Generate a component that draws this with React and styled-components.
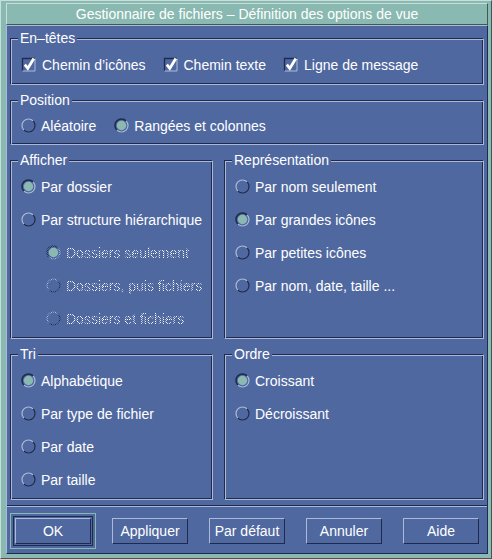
import React, { useId } from "react";
import styled, { createGlobalStyle, css } from "styled-components";

const C = {
  blue: "#5068a0",
  dark: "#1f2a4c",
  light: "#adb9d8",
  teal: "#8ab9b1",
  tealLight: "#c6dfda",
  tealDark: "#3c5b56",
  text: "#ffffff",
};

const GlobalStyle = createGlobalStyle`
  html, body {
    margin: 0;
    padding: 0;
    background: ${C.teal};
  }
  body {
    font-family: "Liberation Sans", Arial, sans-serif;
    font-size: 14px;
  }
`;

const Window = styled.div`
  box-sizing: border-box;
  width: 492px;
  height: 559px;
  background: ${C.teal};
  border: 1px solid;
  border-color: ${C.tealLight} ${C.tealDark} ${C.tealDark} ${C.tealLight};
  padding: 2px 3px 4px 5px;
  display: flex;
  flex-direction: column;
`;

const TitleBar = styled.div`
  box-sizing: border-box;
  height: 22px;
  flex: none;
  border: 1px solid;
  border-color: ${C.tealLight} ${C.tealDark} ${C.tealDark} ${C.tealLight};
  background: ${C.teal};
  color: ${C.text};
  display: flex;
  align-items: center;
  justify-content: center;
  font-size: 14px;
  white-space: nowrap;
`;

const Body = styled.div`
  box-sizing: border-box;
  flex: 1;
  background: ${C.blue};
  border: 1px solid;
  border-color: ${C.light} ${C.dark} ${C.dark} ${C.light};
  display: flex;
  flex-direction: column;
  color: ${C.text};
`;

const Main = styled.div`
  flex: 1;
  display: flex;
  flex-direction: column;
  gap: 15px;
  padding: 12px 3px 0;
`;

const Columns = styled.div`
  display: grid;
  grid-template-columns: 203px 1fr;
  gap: 11px;
`;

const Frame = styled.section`
  position: relative;
  box-sizing: border-box;
  padding: 9px 10px 3px;
  border: 1px solid;
  border-color: ${C.dark} ${C.light} ${C.light} ${C.dark};
  box-shadow: inset 1px 1px 0 ${C.light}, inset -1px -1px 0 ${C.dark};
`;

const Legend = styled.span`
  position: absolute;
  top: -9px;
  left: 7px;
  padding: 0 2px;
  line-height: 16px;
  font-size: 14px;
  color: ${C.text};
  background: ${C.blue};
  white-space: nowrap;
`;

const Inline = styled.div`
  display: flex;
  align-items: center;
  gap: ${(p) => p.$gap}px;
`;

const Row = styled.div`
  height: ${(p) => p.$h ?? 33}px;
  display: flex;
  align-items: center;
  gap: ${(p) => p.$gap ?? 5}px;
  padding-left: ${(p) => p.$indent ?? 0}px;
  white-space: nowrap;
`;

const Text = styled.span`
  color: ${C.text};
  ${(p) =>
    p.$disabled &&
    css`
      color: transparent;
      background-image: conic-gradient(
        #ffffff 0 25%,
        transparent 0 50%,
        #ffffff 0 75%,
        transparent 0
      );
      background-size: 2px 2px;
      -webkit-background-clip: text;
      background-clip: text;
    `}
`;

const Icon = styled.svg`
  flex: none;
  display: block;
`;

const Separator = styled.div`
  height: 0;
  border-top: 1px solid ${C.dark};
  border-bottom: 1px solid ${C.light};
`;

const ButtonRow = styled.div`
  display: flex;
  gap: 21px;
  padding: 11px 8px 9px;
`;

const Button = styled.div`
  box-sizing: border-box;
  width: 76px;
  height: 26px;
  border: 1px solid;
  border-color: ${C.light} ${C.dark} ${C.dark} ${C.light};
  display: flex;
  align-items: center;
  justify-content: center;
  color: ${C.text};
  ${(p) =>
    p.$default &&
    css`
      box-shadow: 0 0 0 1px ${C.blue}, 0 0 0 2px ${C.dark};
      outline: 1px solid ${C.teal};
      outline-offset: 4px;
    `}
`;

function Radio({ checked, disabled }) {
  const raw = useId();
  const id = "m" + raw.replace(/[^a-zA-Z0-9]/g, "");
  const tl = checked ? C.dark : C.light;
  const br = checked ? C.light : C.dark;
  return (
    <Icon width="15" height="15" viewBox="0 0 15 15">
      {disabled && (
        <defs>
          <pattern id={id + "p"} width="2" height="2" patternUnits="userSpaceOnUse">
            <rect width="1" height="1" fill="#fff" />
            <rect x="1" y="1" width="1" height="1" fill="#fff" />
          </pattern>
          <mask id={id}>
            <rect width="15" height="15" fill={`url(#${id}p)`} />
          </mask>
        </defs>
      )}
      {checked && <circle cx="7.5" cy="7.5" r="4.7" fill={C.teal} />}
      <g mask={disabled ? `url(#${id})` : undefined} fill="none">
        <path d="M2.9 12.1 A6.5 6.5 0 0 1 12.1 2.9" stroke={tl} strokeWidth={checked ? 1.5 : 1.2} />
        <path d="M12.1 2.9 A6.5 6.5 0 0 1 2.9 12.1" stroke={br} strokeWidth={1.2} />
      </g>
    </Icon>
  );
}

function Check() {
  return (
    <Icon width="14" height="14" viewBox="0 0 14 14" style={{ overflow: "visible" }}>
      <path d="M0.5 13 V0.5 H13" stroke={C.dark} strokeWidth="1.3" fill="none" />
      <path d="M13 0.5 V13 H0.5" stroke={C.light} strokeWidth="1" fill="none" />
      <path d="M2.8 6.6 L5.8 10.4 L11.8 0.6" stroke="#ffffff" strokeWidth="2.8" fill="none" />
    </Icon>
  );
}

function RadioRow({ label, checked, disabled, indent }) {
  return (
    <Row $indent={indent}>
      <Radio checked={checked} disabled={disabled} />
      <Text $disabled={disabled}>{label}</Text>
    </Row>
  );
}

export default function App() {
  return (
    <>
      <GlobalStyle />
      <Window>
        <TitleBar>Gestionnaire de fichiers – Définition des options de vue</TitleBar>
        <Body>
          <Main>
            <Frame>
              <Legend>En–têtes</Legend>
              <Row $gap={18} $indent={1}>
                <Inline $gap={6}>
                  <Check />
                  <Text>Chemin d’icônes</Text>
                </Inline>
                <Inline $gap={6}>
                  <Check />
                  <Text>Chemin texte</Text>
                </Inline>
                <Inline $gap={6}>
                  <Check />
                  <Text>Ligne de message</Text>
                </Inline>
              </Row>
            </Frame>

            <Frame>
              <Legend>Position</Legend>
              <Row $h={31} $gap={18}>
                <Inline $gap={5}>
                  <Radio />
                  <Text>Aléatoire</Text>
                </Inline>
                <Inline $gap={5}>
                  <Radio checked />
                  <Text>Rangées et colonnes</Text>
                </Inline>
              </Row>
            </Frame>

            <Columns>
              <Frame>
                <Legend>Afficher</Legend>
                <RadioRow label="Par dossier" checked />
                <RadioRow label="Par structure hiérarchique" />
                <RadioRow label="Dossiers seulement" checked disabled indent={25} />
                <RadioRow label="Dossiers, puis fichiers" disabled indent={25} />
                <RadioRow label="Dossiers et fichiers" disabled indent={25} />
              </Frame>
              <Frame>
                <Legend>Représentation</Legend>
                <RadioRow label="Par nom seulement" />
                <RadioRow label="Par grandes icônes" checked />
                <RadioRow label="Par petites icônes" />
                <RadioRow label="Par nom, date, taille ..." />
              </Frame>
            </Columns>

            <Columns>
              <Frame>
                <Legend>Tri</Legend>
                <RadioRow label="Alphabétique" checked />
                <RadioRow label="Par type de fichier" />
                <RadioRow label="Par date" />
                <RadioRow label="Par taille" />
              </Frame>
              <Frame>
                <Legend>Ordre</Legend>
                <RadioRow label="Croissant" checked />
                <RadioRow label="Décroissant" />
              </Frame>
            </Columns>
          </Main>
          <Separator />
          <ButtonRow>
            <Button $default>OK</Button>
            <Button>Appliquer</Button>
            <Button>Par défaut</Button>
            <Button>Annuler</Button>
            <Button>Aide</Button>
          </ButtonRow>
        </Body>
      </Window>
    </>
  );
}
